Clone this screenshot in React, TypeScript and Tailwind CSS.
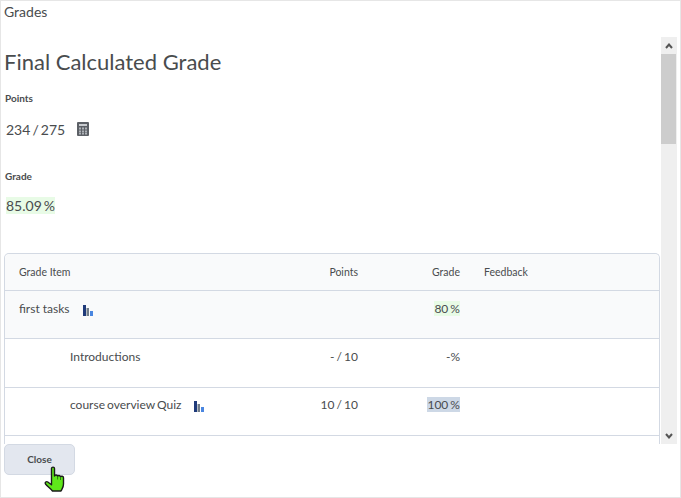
import React from 'react';

function BarsIcon({ className }: { className?: string }) {
  return (
    <svg width="10" height="11" viewBox="0 0 10 11" className={className}>
      <rect x="0" y="0" width="3" height="11" fill="#1f3a7a" />
      <rect x="3.500" y="3" width="2.500" height="8" fill="#717c88" />
      <rect x="7" y="6" width="3" height="5" fill="#4a86e0" />
    </svg>
  );
}

function CalculatorIcon() {
  return (
    <svg width="12" height="14" viewBox="0 0 12 14">
      <rect width="12" height="14" rx="1" fill="#5c6066" />
      <rect x="2" y="2" width="8" height="2" fill="#c9ccd0" />
      <g fill="#aeb2b7">
        <rect x="2" y="5.500" width="2" height="2" />
        <rect x="5" y="5.500" width="2" height="2" />
        <rect x="8" y="5.500" width="2" height="2" />
        <rect x="2" y="8.500" width="2" height="2" />
        <rect x="5" y="8.500" width="2" height="2" />
        <rect x="8" y="8.500" width="2" height="2" />
        <rect x="2" y="11" width="2" height="1.500" />
        <rect x="5" y="11" width="2" height="1.500" />
        <rect x="8" y="11" width="2" height="1.500" />
      </g>
    </svg>
  );
}

function HandCursor() {
  return (
    <svg width="23" height="28" viewBox="0 0 23 28">
      <path
        fill="#5fe81a"
        stroke="#1a1a1a"
        strokeWidth="1.400"
        strokeLinejoin="round"
        d="M7.500 2.500c0-1.800 3-1.800 3 0v7.500c.5-1.500 3-1.300 3.100.3.500-1.300 2.800-1 2.900.5.700-1 3-.7 3 .9v6.300c0 3.500-1.500 4.800-2.500 7h-8.500c-1.500-2.200-5-4.500-7-7-.9-1.500.8-3 2.300-2l3.700 2.800z"
      />
      <path d="M13.600 10.500v3M16.500 11v3" stroke="#2f7a10" strokeWidth="1" fill="none" />
    </svg>
  );
}

const rows = [
  { name: 'first tasks', points: '', grade: '80 %', bars: true, rowClass: 'h-[48px] pt-[10px] bg-[#f9fafb]', nameClass: 'pl-[14px] gap-[13px] [word-spacing:0]', gradeBg: 'bg-[#e8fbe6]' },
  { name: 'Introductions', points: '- / 10', grade: '-%', bars: false, rowClass: 'h-[49px] pt-[10px] bg-white', nameClass: 'pl-[65px]', gradeBg: '' },
  { name: 'course overview Quiz', points: '10 / 10', grade: '100 %', bars: true, rowClass: 'h-[48px] pt-[9px] bg-white', nameClass: 'pl-[65px] gap-[12px]', gradeBg: 'bg-[#cdd8e6]' },
];

export default function App() {
  return (
    <div className="relative flex h-[498px] w-[681px] flex-col overflow-hidden border border-[#e6e6e6] bg-white text-[#494c4e] [font-family:Lato,'Liberation_Sans',sans-serif]">
      <div className="h-[36px] shrink-0 pl-[3px] pt-[1px] text-[14px] leading-[20px]">Grades</div>

      {/* Scrolling body */}
      <div className="flex h-[407px] shrink-0">
        <div className="w-[660px] shrink-0 overflow-hidden pl-[3px] pr-[1px]">
          <h1 className="pt-[11px] text-[22px] font-normal leading-[28px]">Final Calculated Grade</h1>

          <div className="mt-[16px] pl-[1px] text-[10px] font-bold leading-[12px]">Points</div>
          <div className="mt-[15px] flex h-[20px] items-center gap-[12px] pl-[2px] text-[14px] [word-spacing:-1.500px]">
            <span>234 / 275</span>
            <CalculatorIcon />
          </div>

          <div className="mt-[31px] pl-[1px] text-[10px] font-bold leading-[12px]">Grade</div>
          <div className="mt-[13px] flex h-[20px] items-center pl-[2px] text-[14px] [word-spacing:-1.500px]">
            <span className="bg-[#e8fbe6] leading-[17px]">85.09 %</span>
          </div>

          {/* Grades table */}
          <div className="mt-[38px] rounded-t-[5px] border-x border-t border-[#d3d9e3]">
            <div className="flex h-[37px] items-center rounded-t-[5px] border-b border-[#d3d9e3] bg-[#f9fafb] pt-[2px] text-[10.500px]">
              <div className="w-[303px] pl-[14px]">Grade Item</div>
              <div className="w-[50px] text-right">Points</div>
              <div className="w-[102px] text-right">Grade</div>
              <div className="pl-[24px]">Feedback</div>
            </div>
            {rows.map((row) => (
              <div key={row.name} className={`flex items-start border-b border-[#d3d9e3] text-[12px] leading-[16px] [word-spacing:-1px] ${row.rowClass}`}>
                <div className={`flex w-[303px] items-center ${row.nameClass}`}>
                  <span>{row.name}</span>
                  {row.bars && <BarsIcon className="mt-[2px]" />}
                </div>
                <div className="w-[50px] text-right">{row.points}</div>
                <div className="w-[102px] text-right">
                  <span className={row.gradeBg}>{row.grade}</span>
                </div>
              </div>
            ))}
            <div className="h-[12px]" />
          </div>
        </div>

        {/* Scrollbar */}
        <div className="flex w-[16px] shrink-0 flex-col justify-between bg-[#efefef]">
          <div className="flex flex-col">
            <div className="flex h-[17px] items-center justify-center">
              <svg width="8" height="6" viewBox="0 0 8 6">
                <path d="M1 5l3-3.500 3 3.500" fill="none" stroke="#555" strokeWidth="2" />
              </svg>
            </div>
            <div className="h-[90px] w-[15px] bg-[#cdcdcd]" />
          </div>
          <div className="flex h-[17px] items-center justify-center">
            <svg width="8" height="6" viewBox="0 0 8 6">
              <path d="M1 1l3 3.500 3-3.500" fill="none" stroke="#555" strokeWidth="2" />
            </svg>
          </div>
        </div>
      </div>

      {/* Footer */}
      <div className="pl-[3px]">
        <button className="h-[31px] w-[71px] rounded-[5px] border border-[#d3d9e3] bg-[#e3e7ef] text-[10px] font-bold text-[#494c4e]">
          Close
        </button>
      </div>

      {/* Cursor in the screenshot */}
      <div className="absolute left-[43px] top-[465px]">
        <HandCursor />
      </div>
    </div>
  );
}
